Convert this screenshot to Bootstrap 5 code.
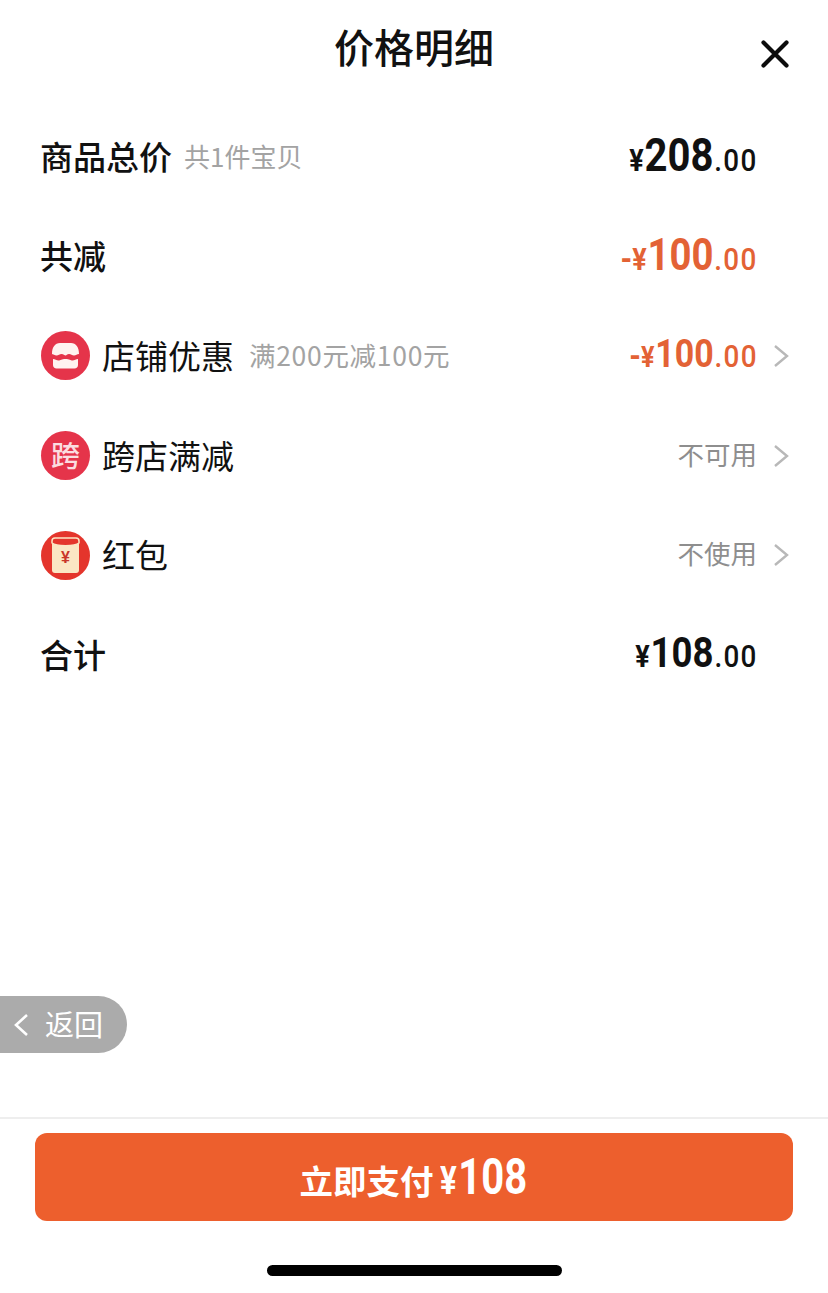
<!DOCTYPE html>
<html lang="zh">
<head>
<meta charset="utf-8">
<title>价格明细</title>
<link href="https://cdn.jsdelivr.net/npm/bootstrap@5.3.0/dist/css/bootstrap.min.css" rel="stylesheet">
<style>
html,body{height:100%;}
body{font-family:"Noto Sans CJK SC","Noto Sans",sans-serif;color:#111;background:#fff;}
.sheet{width:828px;height:1293px;overflow:hidden;position:relative;}
.head-bar{height:107px;position:relative;}
.head-title{font-size:40px;font-weight:500;line-height:1;position:absolute;top:26px;left:0;right:0;text-align:center;margin:0;}
.close-x{position:absolute;left:761px;top:40px;width:28px;height:28px;}
.info-row{height:99.6px;padding:0 38px 0 41px;}
.row-strong{font-size:33px;font-weight:500;line-height:1;margin-bottom:1px;margin-left:-1px;}
.row-plain{font-size:33px;font-weight:400;line-height:1;margin-left:12px;margin-bottom:1px;}
.row-note{font-size:26px;color:#a3a3a3;line-height:1;margin-left:12px;margin-bottom:1px;}
.row-note-b{margin-left:15px;font-size:26.500px;letter-spacing:.7px;}
.ic{width:49px;height:49px;flex:none;}
.ic-text{background:#e5344a;border-radius:50%;color:#fbdde0;font-size:29px;font-weight:500;line-height:47px;text-align:center;}
.amt{font-family:"Roboto",sans-serif;font-weight:700;white-space:nowrap;line-height:1;display:flex;align-items:baseline;margin-left:auto;margin-top:-3px;transform:scaleX(.87);transform-origin:right center;}
.amt-wrap{margin-right:32px;}
.y{font-size:31px;margin-right:1px;}
.y-sm{font-size:29px;}
.minus{font-size:34px;margin-right:0;}
.n46{font-size:46px;}
.n44{font-size:44px;}
.n42{font-size:42px;}
.n39{font-size:39px;}
.dec{font-size:32px;letter-spacing:1.500px;margin-left:1px;font-weight:500;}
.orange{color:#e36235;}
.status{font-size:26.500px;color:#8e8e8e;line-height:1;margin-right:15px;margin-bottom:3px;}
.chev{width:18px;height:24px;flex:none;}
.chev-near{margin-left:14px;}
.back-pill{position:absolute;left:0;top:996px;width:127px;height:57px;background:#ababab;border-radius:0 29px 29px 0;color:#fff;font-size:29px;line-height:55px;}
.back-pill svg{position:absolute;left:13px;top:16px;width:16px;height:26px;}
.back-pill span{position:absolute;left:45px;top:0;}
.foot{position:absolute;left:0;right:0;top:1117px;border-top:2px solid #eeeeee;}
.pay-btn{margin:14px 35px 0 35px;height:88px;width:758px;background:#ed5f2d;border:0;border-radius:12px;color:#fff;font-weight:700;font-size:33.500px;line-height:88px;padding:0;display:flex;align-items:baseline;justify-content:center;}
.pay-btn:hover,.pay-btn:active{background:#ed5f2d;color:#fff;}
.pay-amt{font-family:"Roboto",sans-serif;display:inline-block;transform:scaleX(.8);transform-origin:left center;margin-left:6px;margin-right:-20px;white-space:nowrap;}
.pay-y{font-size:39px;margin-right:2px;}
.pay-n{font-size:50px;}
.home-bar{position:absolute;left:267px;top:1265px;width:295px;height:11px;border-radius:6px;background:#000;}
</style>
</head>
<body>
<div class="sheet d-flex flex-column">
  <header class="head-bar">
    <h1 class="head-title">价格明细</h1>
    <svg class="close-x" viewBox="0 0 28 28"><path d="M2.500 2.500 25.500 25.500M25.500 2.500 2.500 25.500" stroke="#0c0c0c" stroke-width="4.200" stroke-linecap="round" fill="none"/></svg>
  </header>

  <section>
    <div class="info-row d-flex align-items-center">
      <span class="row-strong">商品总价</span><span class="row-note">共1件宝贝</span>
      <div class="amt amt-wrap"><span class="y">¥</span><span class="n46">208</span><span class="dec">.00</span></div>
    </div>
    <div class="info-row d-flex align-items-center">
      <span class="row-strong">共减</span>
      <div class="amt amt-wrap orange"><span class="minus">-</span><span class="y">¥</span><span class="n44">100</span><span class="dec">.00</span></div>
    </div>
    <div class="info-row d-flex align-items-center">
      <svg class="ic" viewBox="0 0 49 49">
        <circle cx="24.500" cy="24.500" r="24.500" fill="#e5344a"/>
        <path d="M11 23c0-7 3-11 8-11h11c5 0 8 4 8 11-2 0-3 1.500-5 1.500s-3-1.500-5-1.500-2.500 1.500-3.500 1.500-2-1.500-4-1.500-3 1.500-5 1.500-3-1.500-5-1.500z" fill="#fff3f0"/>
        <path d="M12 28c2 0 3.500 1.500 5.500 1.500s3-1.500 7-1.500 5 1.500 7 1.500 3.500-1.500 5.500-1.500v6c0 2-1.500 3.500-3.500 3.500h-18c-2 0-3.500-1.500-3.500-3.500z" fill="#fff3f0"/>
      </svg>
      <span class="row-plain">店铺优惠</span><span class="row-note row-note-b">满200元减100元</span>
      <div class="amt orange"><span class="minus">-</span><span class="y y-sm">¥</span><span class="n39">100</span><span class="dec">.00</span></div>
      <svg class="chev chev-near" viewBox="0 0 18 24"><path d="M3 2 15 12 3 22" fill="none" stroke="#b8b8b8" stroke-width="2.400"/></svg>
    </div>
    <div class="info-row d-flex align-items-center">
      <div class="ic ic-text">跨</div>
      <span class="row-plain">跨店满减</span>
      <span class="status ms-auto">不可用</span>
      <svg class="chev" viewBox="0 0 18 24"><path d="M3 2 15 12 3 22" fill="none" stroke="#b8b8b8" stroke-width="2.400"/></svg>
    </div>
    <div class="info-row d-flex align-items-center">
      <svg class="ic" viewBox="0 0 49 49">
        <circle cx="24.500" cy="24.500" r="24.500" fill="#e4352c"/>
        <rect x="11" y="7" width="27" height="35" rx="3" fill="#fbe6c4"/>
        <path d="M11 10c0-2 1.500-3 3-3h21c1.500 0 3 1 3 3v2c-4 3.500-23 3.500-27 0z" fill="#e4352c" stroke="#fbe6c4" stroke-width="1.500"/>
        <text x="24.500" y="32" font-size="16" font-weight="700" text-anchor="middle" fill="#c9352a" font-family="Liberation Sans">¥</text>
      </svg>
      <span class="row-plain">红包</span>
      <span class="status ms-auto">不使用</span>
      <svg class="chev" viewBox="0 0 18 24"><path d="M3 2 15 12 3 22" fill="none" stroke="#b8b8b8" stroke-width="2.400"/></svg>
    </div>
    <div class="info-row d-flex align-items-center">
      <span class="row-strong">合计</span>
      <div class="amt amt-wrap"><span class="y">¥</span><span class="n42">108</span><span class="dec">.00</span></div>
    </div>
  </section>

  <a class="back-pill text-decoration-none" href="#">
    <svg viewBox="0 0 16 26"><path d="M14 3 3 13 14 23" fill="none" stroke="#fff" stroke-width="2.600"/></svg>
    <span>返回</span>
  </a>

  <footer class="foot">
    <button class="btn pay-btn" type="button"><span>立即支付</span><span class="pay-amt"><span class="pay-y">¥</span><span class="pay-n">108</span></span></button>
  </footer>
  <div class="home-bar"></div>
</div>
</body>
</html>
